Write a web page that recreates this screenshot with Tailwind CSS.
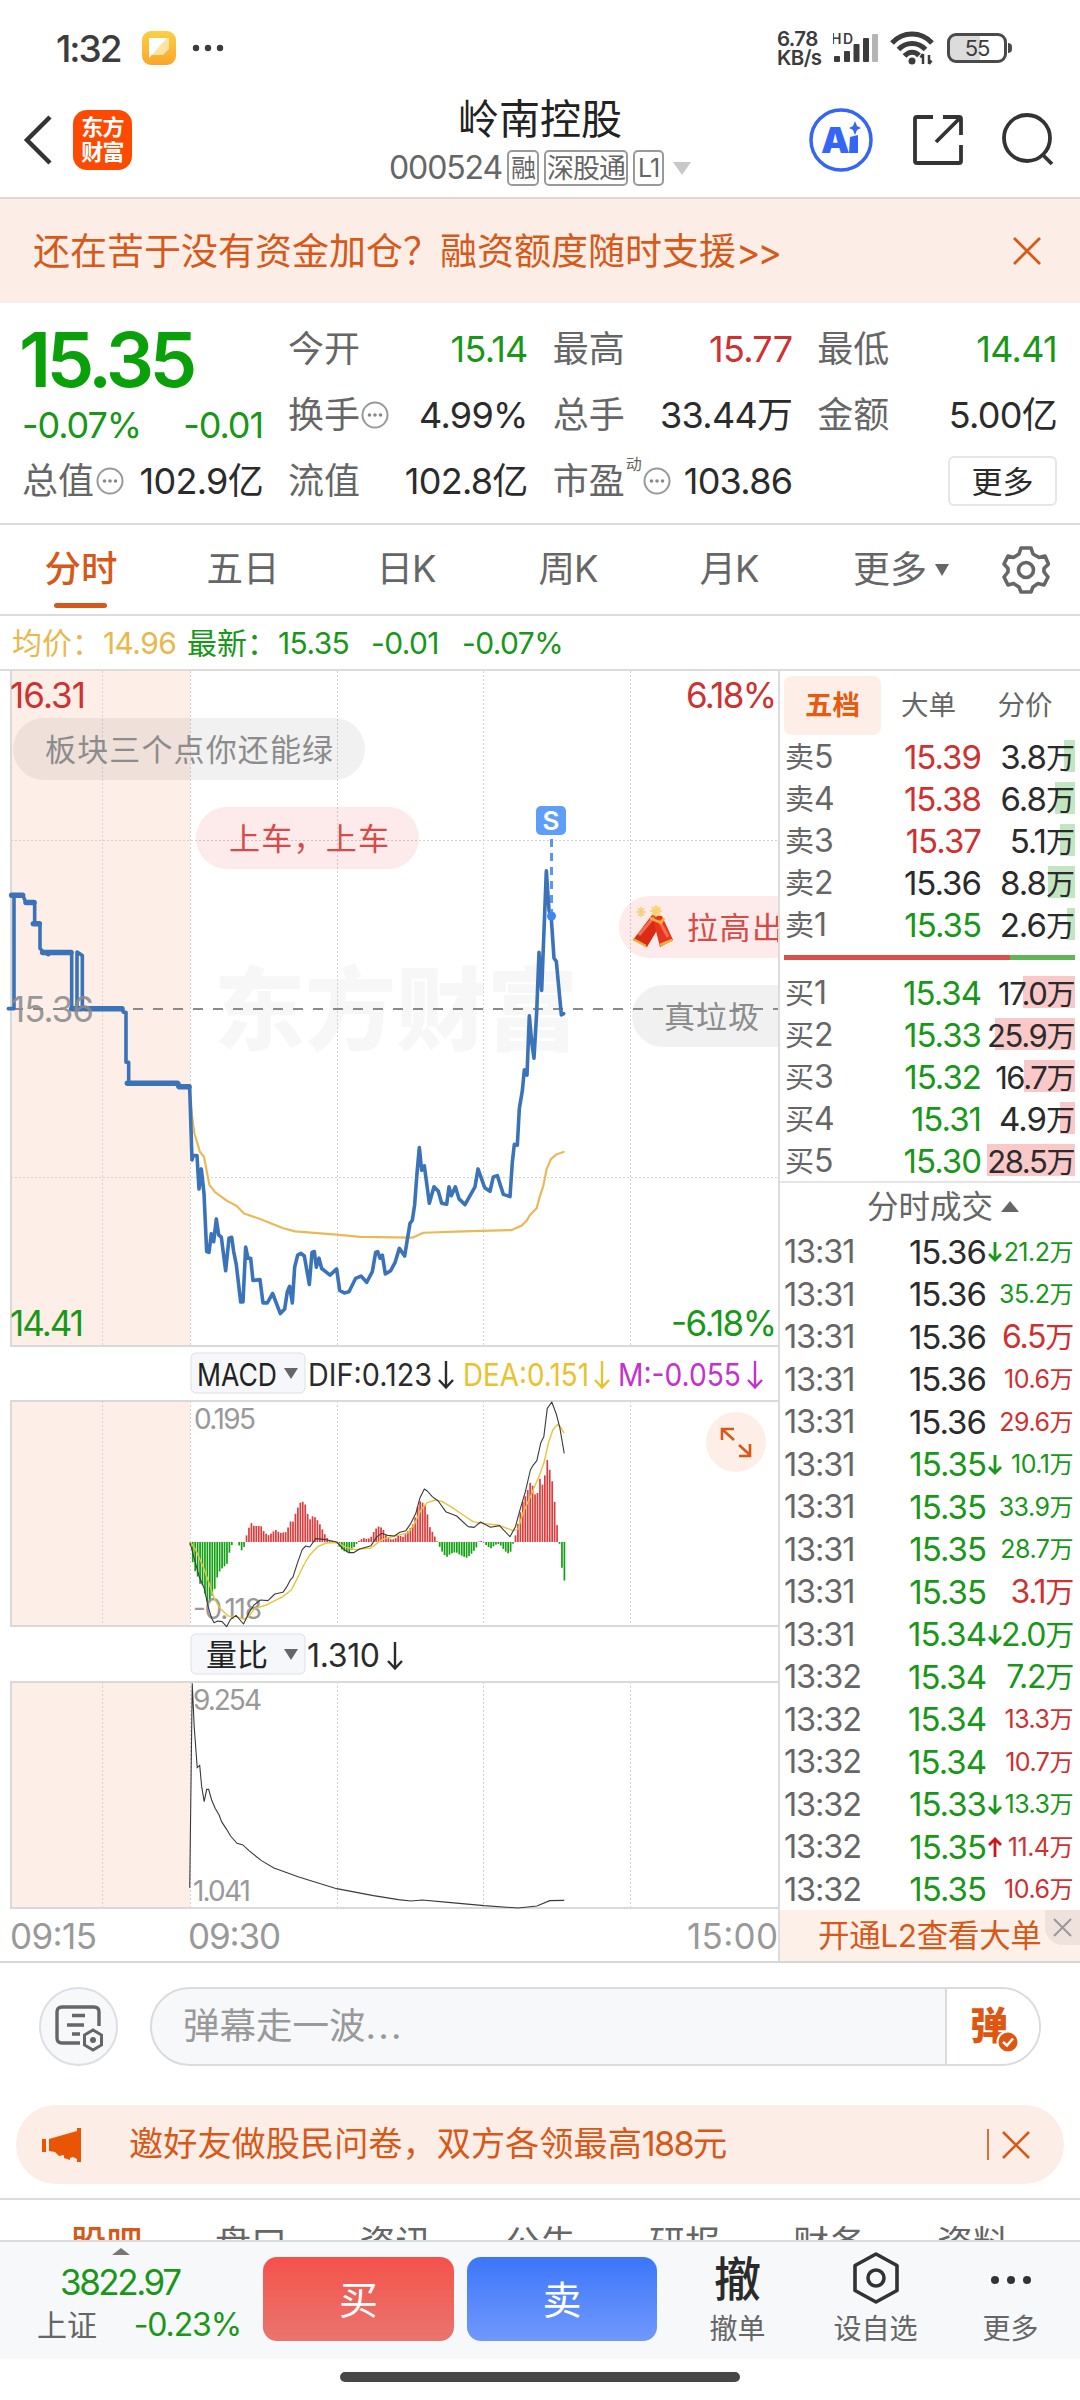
<!DOCTYPE html>
<html lang="zh-CN">
<head>
<meta charset="utf-8">
<title>岭南控股 000524</title>
<script src="https://cdn.jsdelivr.net/npm/@tailwindcss/browser@4"></script>
</head>
<body class="w-[1080px] h-[2400px] overflow-hidden bg-white text-[#2b2b2b] font-['Inter','Noto_Sans_CJK_SC',sans-serif] leading-none whitespace-nowrap">

<!-- status bar -->
<div class="h-[96px] flex items-center pl-[56px] pr-[73px]">
  <span class="w-[86px] text-[37px] tracking-[-0.055em] text-[#3c3c3c] font-medium">1:32</span>
  <svg class="w-[34px] h-[34px]" viewBox="0 0 34 34"><defs><linearGradient id="note" x1="0" y1="0" x2="0" y2="1"><stop offset="0" stop-color="#fbd044"/><stop offset="1" stop-color="#fba52a"/></linearGradient></defs><rect width="34" height="34" rx="9" fill="url(#note)"/><path d="M7 7H27V18L21 24H7Z" fill="#fde3a4"/><path d="M7 7H25L7 27Z" fill="#fff"/></svg>
  <svg class="w-[32px] h-[8px] ml-[16px]" viewBox="0 0 32 8" fill="#3c3c3c"><circle cx="4" cy="4" r="3.2"/><circle cx="16" cy="4" r="3.2"/><circle cx="28" cy="4" r="3.2"/></svg>
  <div class="ml-auto w-[56px] text-[20.500px] leading-[19px] tracking-[-0.03em] font-semibold text-[#3c3c3c]"><div>6.78</div><div>KB/s</div></div>
  <svg class="w-[48px] h-[34px]" viewBox="0 0 48 34"><text x="-2" y="13" font-size="14" font-weight="600" fill="#3c3c3c" textLength="22">HD</text><g fill="#3c3c3c"><rect x="1" y="25" width="6" height="6" rx="1"/><rect x="11" y="20" width="6" height="11" rx="1"/><rect x="20.500" y="13" width="6" height="18" rx="1"/><rect x="30" y="7" width="6" height="24" rx="1"/></g><rect x="39" y="3" width="6" height="28" rx="1" fill="#b5b5b5"/></svg>
  <svg class="w-[44px] h-[36px] ml-[9px]" viewBox="0 0 44 36" fill="none" stroke="#3c3c3c" stroke-width="5"><path d="M2 13C13 1 31 1 42 13"/><path d="M8.500 19.500C16 11.500 28 11.500 35.500 19.500"/><path d="M14.500 26C19 21 25 21 29 25.500"/><circle cx="22" cy="31" r="3.500" fill="#3c3c3c" stroke="none"/><path d="M33 34V24M39 25V34M30.500 27.500L33 24M41.500 30.500L39 34" stroke-width="2.500"/></svg>
  <div class="relative ml-[13px] w-[60px] h-[30px] rounded-[9px] border-[3px] border-[#4a4a4a] bg-linear-to-r from-[#dcdcdc] from-55% to-white to-55% flex items-center justify-center text-[22px] tracking-tighter text-[#3c3c3c]">55<span class="absolute -right-[8px] top-[7px] w-[4px] h-[10px] rounded-r bg-[#4a4a4a]"></span></div>
</div>

<!-- header -->
<header class="h-[103px] border-b-2 border-[#d9d9d9] grid grid-cols-[330px_1fr_330px]">
  <div class="flex items-center pl-[22px] h-[88px]">
    <svg class="w-[32px] h-[50px]" viewBox="0 0 32 50" fill="none" stroke="#333" stroke-width="4.500"><path d="M28 2L5 25L28 48"/></svg>
    <div class="ml-[19px] w-[59px] h-[60px] rounded-[14px] bg-[#fd4a03] text-white text-[22px] leading-[25px] font-bold flex flex-col items-center justify-center tracking-[-0.03em]"><span>东方</span><span>财富</span></div>
  </div>
  <div class="flex flex-col items-center">
    <div class="mt-[1px] h-[44px] text-[41px] flex items-center text-[#222]">岭南控股</div>
    <div class="mt-[9px] flex items-center gap-[5px] text-[#666] text-[25px] tracking-[-0.04em]">
      <span class="text-[32px] tracking-[-0.035em]">000524</span>
      <span class="h-[36px] w-[32px] border-2 border-[#999] rounded-[5px] flex items-center justify-center">融</span>
      <span class="h-[36px] w-[84px] border-2 border-[#999] rounded-[5px] flex items-center justify-center text-[27px]">深股通</span>
      <span class="h-[36px] w-[31px] border-2 border-[#999] rounded-[5px] flex items-center justify-center">L1</span>
      <svg class="ml-[4px] w-[18px] h-[13px]" viewBox="0 0 18 13"><path d="M0 0H18L9 13Z" fill="#c8c8c8"/></svg>
    </div>
  </div>
  <div class="flex items-center justify-end h-[88px] pr-[25px] gap-[38px]">
    <svg class="w-[64px] h-[64px]" viewBox="0 0 64 64"><circle cx="32" cy="32" r="30" fill="none" stroke="#3565f6" stroke-width="3.500"/><text x="12" y="45" font-size="36" font-weight="900" fill="#3565f6" textLength="26">A</text><path d="M41 29L49 27V45H40Z" fill="#3565f6"/><path d="M46 13L48 18L52 20L48 22L46 27L44 22L40 20L44 18Z" fill="#3565f6"/></svg>
    <svg class="w-[54px] h-[54px]" viewBox="0 0 54 54" fill="none" stroke="#333" stroke-width="3.800"><path d="M22 4H6Q4 4 4 6V48Q4 50 6 50H48Q50 50 50 48V32M32 4H48Q50 4 50 6V22M49 5L25 29"/></svg>
    <svg class="w-[54px] h-[54px] -ml-[2px]" viewBox="0 0 54 54" fill="none" stroke="#333" stroke-width="3.800"><circle cx="26" cy="25" r="23"/><path d="M41 41L51 51"/></svg>
  </div>
</header>

<div class="h-[104px] bg-[#fceee6] flex items-center justify-between pl-[33px] pr-[38px] text-[#d7591a] text-[37px]">
  <span>还在苦于没有资金加仓？融资额度随时支援<span class="tracking-[-0.08em]">&gt;&gt;</span></span>
  <svg class="w-[30px] h-[30px]" viewBox="0 0 30 30" stroke="#d7591a" stroke-width="2.800"><path d="M2 2L28 28M28 2L2 28"/></svg>
</div>

<!-- quote summary -->
<section class="h-[222px] border-b-2 border-[#dcdcdc] pl-[22px] pr-[23px] flex gap-[25px] text-[36px]">
  <div class="w-[241px] pt-[23px]">
    <div class="h-[66px] -ml-[3px] flex items-center text-[76px] font-semibold text-[#0aa00a] tracking-[-0.06em]">15.35</div>
    <div class="mt-[13px] h-[40px] flex items-center justify-between text-[#189718] tracking-[-0.03em]"><span>-0.07%</span><span>-0.01</span></div>
    <div class="mt-[16px] h-[40px] flex items-center text-[#666]">总值<svg class="w-[28px] h-[28px] ml-[2px]" viewBox="0 0 28 28"><circle cx="14" cy="14" r="12.500" fill="none" stroke="#999" stroke-width="2"/><g fill="#888"><circle cx="8.500" cy="14" r="1.800"/><circle cx="14" cy="14" r="1.800"/><circle cx="19.500" cy="14" r="1.800"/></g></svg><span class="ml-auto text-[#2b2b2b] tracking-[-0.02em]">102.9亿</span></div>
  </div>
  <div class="flex-1 pt-[26px] grid grid-cols-3 gap-x-[25px] auto-rows-[66px] tracking-[-0.02em] text-[#2b2b2b]" id="stats"></div>
</section>

<!-- period tabs -->
<nav class="relative h-[91px] border-b-2 border-[#dcdcdc] flex items-center text-[36.500px] text-[#666]">
  <span class="w-[162px] text-center text-[#d7591a] font-medium">分时</span>
  <span class="w-[162px] text-center">五日</span>
  <span class="w-[164px] text-center tracking-[-0.03em]">日K</span>
  <span class="w-[160px] text-center tracking-[-0.03em]">周K</span>
  <span class="w-[162px] text-center tracking-[-0.03em]">月K</span>
  <span class="w-[193px] pl-[43px] flex items-center gap-[8px] text-[37px]">更多<svg class="w-[14px] h-[12px]" viewBox="0 0 14 12"><path d="M0 0H14L7 12Z" fill="#666"/></svg></span>
  <svg class="w-[48px] h-[50px] -ml-[1px]" viewBox="0 0 48 50" fill="none" stroke="#666" stroke-width="3.600" stroke-linejoin="round"><path d="M19 3H29L31 9L37 12.500L43 11L46.500 19L42 23.500V27L46 32L42 40L36 38.500L31 42L29 47H19L17 42L11.500 38.500L6 40L2 32L6 27V23.500L2 19L6 11L11.500 12.500L17 9Z"/><circle cx="24" cy="25" r="7.500"/></svg>
  <div class="absolute left-[54px] bottom-[6px] w-[53px] h-[5px] rounded-full bg-[#d7591a]"></div>
</nav>
<div class="h-[55px] border-b-2 border-[#dcdcdc] flex items-center pl-[12px] pt-[1px] text-[30px] text-[#189718] tracking-[-0.02em]">
  <span class="w-[91px] text-[#e9b84d] tracking-normal">均价：</span><span class="w-[84px] text-[#e9b84d]">14.96</span>
  <span class="w-[91px] tracking-normal">最新：</span><span class="w-[93px]">15.35</span><span class="w-[91px]">-0.01</span><span>-0.07%</span>
</div>

<main class="h-[1292px] flex border-b-2 border-[#d6d6d6]">
  <!-- charts; viewBox uses page coordinates -->
  <svg class="w-[778px] h-[1290px] shrink-0" viewBox="0 671 778 1290">
    <g fill="#fdeee7"><rect x="11" y="671" width="179" height="675"/><rect x="11" y="1401" width="179" height="225"/><rect x="11" y="1682" width="179" height="226"/></g>
    <text x="214" y="1043" font-size="91" font-weight="900" fill="#f7f7f7" textLength="364">东方财富</text>
    <g stroke="#d2d2d2" stroke-width="1" stroke-dasharray="2 2" fill="none">
      <path d="M102.500 671V1346M190.500 671V1346M337.500 671V1346M483.500 671V1346M630.500 671V1346M11 840.500H778M11 1177.500H778"/>
      <path d="M102.500 1401V1626M190.500 1401V1626M337.500 1401V1626M483.500 1401V1626M630.500 1401V1626"/>
      <path d="M102.500 1682V1908M190.500 1682V1908M337.500 1682V1908M483.500 1682V1908M630.500 1682V1908"/>
    </g>
    <g stroke="#d9d9d9" stroke-width="2" fill="none"><path d="M778 1346H11V671"/><path d="M778 1401H11V1626H778"/><path d="M778 1682H11V1908H778"/></g>

    <g font-size="31">
      <rect x="13" y="718" width="352" height="62" rx="31" fill="#000" fill-opacity=".055"/><text x="45" y="761" fill="#8c8c8c" textLength="288">板块三个点你还能绿</text>
      <rect x="196" y="807" width="223" height="62" rx="31" fill="#f03c3c" fill-opacity=".1"/><text x="229" y="850" fill="#d64a48" textLength="160">上车，上车</text>
      <rect x="619" y="896" width="220" height="62" rx="31" fill="#f03c3c" fill-opacity=".1"/><text x="687" y="939" fill="#d64a48" textLength="96">拉高出</text>
      <rect x="632" y="985" width="190" height="62" rx="31" fill="#000" fill-opacity=".055"/>
    </g>
    <g><path d="M633 940L652 915L662 922L647 947Z" fill="#d92b16"/><path d="M652 915L662 916L673 940L660 947Z" fill="#e53420"/><path d="M639 935L654 917M668 937L659 920" stroke="#ff6b4d" stroke-width="3"/><path d="M633 939L646 946M660 945L672 940M650 918L661 923L664 918" stroke="#e8b13c" stroke-width="2.500" fill="none"/><circle cx="656" cy="911" r="5" fill="#fbe08c"/><path d="M656 905V917M650 911H662M652 907L660 915M660 907L652 915M641 907V917M636 912H646M638 908L644 916M644 908L638 916" stroke="#f6cf77" stroke-width="1.500"/></g>

    <path d="M13 1009H778" stroke="#8a8a8a" stroke-width="1.800" stroke-dasharray="10 10"/>
    <text x="664" y="1028" font-size="31" fill="#8c8c8c" textLength="95">真垃圾</text>

    <g font-size="35">
      <text x="10" y="708" fill="#cf3030" textLength="76">16.31</text><text x="686" y="708" fill="#cf3030" textLength="91">6.18%</text>
      <text x="10" y="1336" fill="#189718" textLength="74">14.41</text><text x="671" y="1336" fill="#189718" textLength="106">-6.18%</text>
    </g>

    <g fill="none" transform="translate(0 660) scale(.33333 .44643)" stroke-linejoin="round" stroke-linecap="round">
      <path vector-effect="non-scaling-stroke" stroke="#eab955" stroke-width="2.200" d="M572 980L576 1020L583 1060L600 1102L612 1113L628 1175L645 1192L680 1211L710 1223L732 1240L780 1252L850 1273L885 1280L1010 1287L1080 1292L1237 1294L1270 1283L1390 1280L1535 1277L1565 1267L1580 1256L1590 1243L1610 1228L1618 1205L1630 1178L1640 1140L1653 1118L1670 1107L1691 1102"/>
      <path vector-effect="non-scaling-stroke" stroke="#3a73b9" stroke-width="3.600" d="M25 781H42V527H68L78 543H104V591H120V646L130 654L145 660L152 655H215V781H231V654L247 662V781H366L370 789H378V901H386V948H533L535 956H569L576 1120L580 1110H591L597 1185L604 1140L612 1195L620 1325L627 1327L634 1285L641 1303L649 1252L656 1288L664 1293L677 1368L687 1295L695 1293L701 1325L709 1355L722 1438H729L737 1315L744 1340H752L759 1390L780 1388L789 1440H802L818 1419L841 1464L854 1454L862 1415L869 1403L877 1440L884 1360L893 1333L903 1329L913 1335L928 1399L936 1327L943 1325L949 1360L957 1340L965 1363L990 1378L1010 1364L1019 1412L1033 1418L1047 1415L1067 1385L1083 1380L1100 1394L1117 1370L1127 1327L1133 1325L1140 1340L1147 1333L1156 1375L1172 1368L1185 1350L1198 1318L1214 1335L1230 1262L1237 1255L1244 1220L1251 1150L1258 1092L1265 1143L1273 1133L1288 1217L1302 1180L1315 1190L1325 1217L1340 1219L1347 1180L1354 1200L1366 1180L1377 1207L1395 1220L1425 1180L1434 1140L1454 1182L1470 1190L1480 1158L1492 1155L1510 1197L1530 1202L1537 1125L1543 1085L1552 1087L1558 1005L1567 965L1573 918L1581 930L1588 797L1595 855L1602 892L1610 790L1617 655L1625 740L1639 472L1647 560L1654 580L1662 668L1669 675L1684 795L1691 792"/>
      <path vector-effect="non-scaling-stroke" stroke="#3a73b9" stroke-width="5.500" d="M35 527H68M78 543H102M100 591H118M128 655H213M215 781H245M255 781H366M382 948H533L537 956H567"/>
    </g>
    <text x="11" y="1022" font-size="35" fill="#8c8c8c" fill-opacity=".9" textLength="83">15.36</text>
    <path d="M551.500 839V916" stroke="#5a96ef" stroke-width="3" stroke-dasharray="8 6"/><circle cx="551.500" cy="916" r="4.500" fill="#3f86f0"/>
    <rect x="536" y="806" width="30" height="29" rx="5" fill="#5d9ff8"/><text x="551" y="830" font-size="26" font-weight="600" text-anchor="middle" fill="#fff">S</text>

    <!-- MACD -->
    <g font-size="31">
      <rect x="191" y="1353" width="114" height="40" rx="5" fill="#f6f7fa" stroke="#dedfe3"/><text x="197" y="1386" fill="#222" textLength="80" lengthAdjust="spacingAndGlyphs">MACD</text><path d="M284 1368H298L291 1379Z" fill="#666"/>
      <text x="308" y="1386" fill="#2b2b2b" textLength="124" lengthAdjust="spacingAndGlyphs">DIF:0.123</text><text x="463" y="1386" fill="#e9c22e" textLength="126" lengthAdjust="spacingAndGlyphs">DEA:0.151</text><text x="618" y="1386" fill="#c531cf" textLength="123" lengthAdjust="spacingAndGlyphs">M:-0.055</text>
      <g fill="none" stroke-width="2.400"><path d="M446 1361V1387M439 1380L446 1387.500L453 1380" stroke="#2b2b2b"/><path d="M602 1361V1387M595 1380L602 1387.500L609 1380" stroke="#e9c22e"/><path d="M755 1361V1387M748 1380L755 1387.500L762 1380" stroke="#c531cf"/></g>
    </g>
    <g id="bars"></g>
    <g fill="#999" font-size="28"><text x="194" y="1429" textLength="62">0.195</text><text x="193" y="1619" textLength="69">-0.118</text></g>
    <g fill="none" transform="translate(0 1340) scale(.498 .33333)" stroke-linejoin="round">
      <path vector-effect="non-scaling-stroke" stroke="#e6c53a" stroke-width="1.400" d="M382 605L393 630L408 680L420 730L430 775L442 805L458 828L474 830L490 838L500 828L512 805L535 795L568 770L585 750L597 715L610 675L622 645L638 620L655 609L676 608L695 622L715 629L745 624L757 610L768 598L785 591L800 586L820 578L833 550L845 510L858 488L875 480L888 485L905 500L930 525L950 545L968 550L1000 555L1030 572L1040 568L1050 520L1062 480L1072 445L1082 410L1092 370L1101 310L1110 270L1120 253L1125 260L1133 280"/>
      <path vector-effect="non-scaling-stroke" stroke="#3a3a3a" stroke-width="1.100" d="M382 610L390 655L400 710L410 745L418 800L425 835L430 848L437 843L446 845L455 860L463 838L474 826L489 852L500 818L510 795L523 780L538 782L552 762L568 757L576 740L583 720L588 712L597 670L607 628L614 618L622 621L634 596L650 598L676 606L688 625L700 638L710 638L722 627L745 617L757 590L766 580L778 586L792 588L803 577L815 572L825 550L835 520L843 475L852 447L858 453L868 470L880 483L895 515L917 528L940 560L952 562L965 546L985 562L1003 557L1024 590L1035 560L1045 505L1055 455L1065 390L1070 377L1078 362L1086 308L1092 290L1099 205L1108 186L1117 222L1124 262L1133 340"/>
    </g>
    <circle cx="736" cy="1442" r="30" fill="#fdefe8"/><path d="M722 1440V1429H734M723 1430L734 1440M739 1445L750 1455M739 1456H750V1444" fill="none" stroke="#d7591a" stroke-width="2.600"/>

    <!-- volume ratio -->
    <rect x="191" y="1634" width="114" height="40" rx="5" fill="#f6f7fa" stroke="#dedfe3"/><text x="206" y="1666" font-size="31" fill="#222">量比</text><path d="M284 1649H298L291 1660Z" fill="#666"/>
    <text x="307" y="1667" font-size="32" fill="#2b2b2b" textLength="73">1.310</text><path d="M395 1642V1668M388 1661L395 1668.500L402 1661" fill="none" stroke="#2b2b2b" stroke-width="2.400"/>
    <g fill="#999" font-size="28"><text x="193" y="1710" textLength="69">9.254</text><text x="193" y="1901" textLength="58">1.041</text></g>
    <path transform="translate(0 1620) scale(.498 .33333)" vector-effect="non-scaling-stroke" fill="none" stroke="#3a3a3a" stroke-width="1.100" d="M381 803L386 190L390 320L396 443L401 436L405 500L410 545L415 508H419L425 540L432 565L440 585L445 605L455 628L463 648L476 670L487 674L500 692L525 722L550 744L600 771L676 806L750 827L800 839L825 843L848 840L900 847L972 857L1040 864L1078 858L1104 842L1133 841"/>
    <g fill="#999" font-size="35"><text x="10" y="1949" textLength="87">09:15</text><text x="188" y="1949" textLength="93">09:30</text><text x="687" y="1949" textLength="91">15:00</text></g>
  </svg>

  <!-- order book -->
  <aside class="w-[302px] border-l-2 border-[#dcdcdc] flex flex-col">
    <div class="h-[69px] pt-[5px] pl-[4px] flex items-start text-[27.500px] text-[#666]">
      <span class="w-[97px] h-[59px] rounded-[8px] bg-[#fdeee7] text-[#e75a10] font-bold flex items-center justify-center">五档</span>
      <span class="w-[95px] h-[59px] flex items-center justify-center">大单</span>
      <span class="w-[98px] h-[59px] flex items-center justify-center">分价</span>
    </div>
    <div id="asks"></div>
    <div class="mt-[5px] ml-[4px] mr-[5px] h-[5px] flex bg-[#5fb653]"><div class="w-[226px] h-full bg-[#d94f4c]"></div></div>
    <div class="mt-[16px]" id="bids"></div>
    <div class="border-t-2 border-[#e6e6e6] h-[49px] flex items-center justify-center gap-[8px] pl-[26px] text-[31.500px] text-[#666]">分时成交<svg class="w-[18px] h-[11px]" viewBox="0 0 18 11"><path d="M0 11H18L9 0Z" fill="#666"/></svg></div>
    <div class="pt-[1px] h-[680px]" id="ticks"></div>
    <div class="relative mt-auto h-[51px] shrink-0 bg-[#fdf0e9] flex items-center pl-[38px] text-[31.500px] text-[#d7591a] tracking-[-0.01em]">开通L2查看大单<span class="absolute right-0 top-0 w-[35px] h-[35px] rounded-bl-[18px] bg-[#efe2dc] flex items-center justify-center"><svg class="w-[19px] h-[19px]" viewBox="0 0 19 19" stroke="#999" stroke-width="2"><path d="M1 1L18 18M18 1L1 18"/></svg></span></div>
  </aside>
</main>

<!-- comment input -->
<section class="h-[142px] pt-[24px] pl-[39px] pr-[39px] flex gap-[32px]">
  <div class="w-[79px] h-[79px] rounded-full border-2 border-[#dcdfe3] bg-[#f7f8fa] flex items-center justify-center"><svg class="w-[52px] h-[50px]" viewBox="0 0 52 50" fill="none" stroke="#666" stroke-width="3.400"><path d="M27 41H9Q4 41 4 36V10Q4 5 9 5H41Q46 5 46 10V24M19 13.500H32M14 23H31M19 32H27"/><path d="M40 28L48.500 33V43L40 48L31.500 43V33Z" stroke-width="3"/><circle cx="40" cy="38" r="3" fill="#666" stroke="none"/></svg></div>
  <div class="flex-1 h-[79px] rounded-full border-2 border-[#d9dbdf] bg-[#f7f8fa] flex items-center overflow-hidden">
    <span class="flex-1 pl-[31px] text-[36.500px] text-[#999]">弹幕走一波<span class="tracking-[0.06em]">...</span></span>
    <span class="relative w-[94px] h-full border-l-2 border-[#d9dbdf] bg-white"><span class="absolute left-[23px] top-[17px] text-[38px] font-black text-[#dd5713]">弹</span><svg class="absolute left-[49px] top-[41px] w-[24px] h-[24px]" viewBox="0 0 24 24"><circle cx="12" cy="12" r="10.500" fill="#dd5713" stroke="#fff" stroke-width="2"/><path d="M7 12L11 15.500L17 8.500" fill="none" stroke="#fff" stroke-width="2.500"/></svg></span>
  </div>
</section>

<div class="mx-[16px] h-[79px] rounded-full bg-[#fceee6] flex items-center pl-[25px] pr-[33px] text-[34.200px] text-[#d7591a]">
  <svg class="w-[41px] h-[34px]" viewBox="0 0 41 34" fill="#e85504"><path d="M1 11H5V24H1ZM8 11L36 3V0H40V34H36V31L32 29L29 30V32L23 30V27L18 28L14 24L8 23Z"/></svg>
  <span class="ml-[47px]">邀好友做股民问卷，双方各领最高<span class="tracking-[-0.05em]">188</span>元</span>
  <span class="ml-auto w-[2px] h-[31px] bg-[#d7713c]"></span>
  <svg class="ml-[12px] w-[30px] h-[30px]" viewBox="0 0 30 30" stroke="#d7591a" stroke-width="2.600"><path d="M2 2L28 28M28 2L2 28"/></svg>
</div>

<div class="mt-[14px] h-[42px] border-t-2 border-[#dcdcdc] overflow-hidden flex pl-[34px] pt-[26px] text-[36px] text-[#666]">
  <span class="w-[145px] text-center font-medium text-[#d7591a]">股吧</span><span class="w-[144px] text-center">盘口</span><span class="w-[145px] text-center">资讯</span><span class="w-[145px] text-center">公告</span><span class="w-[144px] text-center">研报</span><span class="w-[144px] text-center">财务</span><span class="w-[144px] text-center">资料</span>
</div>

<!-- trade bar -->
<footer class="h-[119px] border-t-2 border-[#d9dbdf] bg-[#f7f8fa] flex text-[#666] text-[28px]">
  <div class="w-[263px] pl-[37px] pr-[22px] pt-[6px] flex flex-col">
    <svg class="w-[18px] h-[7px] ml-[75px]" viewBox="0 0 18 7"><path d="M0 7H18L9 0Z" fill="#777"/></svg>
    <div class="h-[40px] mt-[7px] pl-[23px] flex items-center text-[35px] tracking-[-0.07em] text-[#189718]">3822.97</div>
    <div class="h-[38px] mt-[4px] flex items-center justify-between text-[30px]"><span>上证</span><span class="text-[32px] tracking-[-0.035em] text-[#189718]">-0.23%</span></div>
  </div>
  <div class="mt-[15px] w-[191px] h-[84px] rounded-[14px] bg-linear-to-b from-[#f4514a] to-[#e9746d] flex items-center justify-center text-white text-[39px]">买</div>
  <div class="mt-[15px] ml-[13px] w-[190px] h-[84px] rounded-[14px] bg-linear-to-b from-[#3b76fa] to-[#7098fb] flex items-center justify-center text-white text-[39px]">卖</div>
  <div class="ml-[52px] w-[57px] pt-[13px] flex flex-col items-center"><span class="text-[47px] font-medium text-[#2b2b2b] h-[47px]">撤</span><span class="mt-[13px]">撤单</span></div>
  <div class="ml-[66px] w-[87px] pt-[9px] flex flex-col items-center"><svg class="w-[50px] h-[54px]" viewBox="0 0 50 54" fill="none" stroke="#333" stroke-width="3.600" stroke-linejoin="round"><path d="M25 3L46 14.500V39.500L25 51L4 39.500V14.500Z"/><circle cx="25" cy="27" r="8"/></svg><span class="mt-[10px]">设自选</span></div>
  <div class="ml-[62px] w-[59px] pt-[9px] flex flex-col items-center"><svg class="w-[42px] h-[54px]" viewBox="0 0 42 54" fill="#333"><circle cx="5" cy="29" r="4"/><circle cx="21" cy="29" r="4"/><circle cx="37" cy="29" r="4"/></svg><span class="mt-[10px]">更多</span></div>
</footer>
<div class="mx-auto mt-[13px] w-[400px] h-[10px] rounded-full bg-[#474747]"></div>

<script>
const info = '<svg class="w-[28px] h-[28px] ml-[1px]" viewBox="0 0 28 28"><circle cx="14" cy="14" r="12.5" fill="none" stroke="#999" stroke-width="2"/><g fill="#888"><circle cx="8.5" cy="14" r="1.8"/><circle cx="14" cy="14" r="1.8"/><circle cx="19.5" cy="14" r="1.8"/></g></svg>';
const G = 'text-[#189718]', R = 'text-[#cf3030]', K = 'text-[#2b2b2b]';
const cell = (l, v, c, extra = '') => `<div class="h-[40px] flex items-center justify-between"><span class="flex items-center text-[#666] tracking-normal">${l}${extra}</span><span class="${c}">${v}</span></div>`;
document.getElementById('stats').innerHTML =
  cell('今开', '15.14', G) + cell('最高', '15.77', R) + cell('最低', '14.41', G) +
  cell('换手', '4.99%', K, info) + cell('总手', '33.44万', K) + cell('金额', '5.00亿', K) +
  cell('流值', '102.8亿', K) +
  cell('市盈', '103.86', K, '<span class="text-[16px] mb-[34px] ml-[1px]">动</span>' + info) +
  '<div class="flex justify-end h-[50px] -mt-[5px]"><span class="w-[109px] h-[50px] rounded-[6px] border-2 border-[#e6e6e6] flex items-center justify-center text-[31px] tracking-normal">更多</span></div>';

const row = (l, p, c, q, w, bg, h) => `<div class="relative ${h} flex items-start"><div class="absolute right-[5px] top-0 h-[32px] ${bg}" style="width:${w}px"></div><div class="relative w-full h-[34px] flex items-center pl-[5px] text-[#666]"><span class="w-[70px] text-[29px] flex items-center">${l[0]}<span class="text-[32px]">${l[1]}</span></span><span class="w-[126px] text-right text-[33px] tracking-[-0.03em] ${c}">${p}</span><span class="w-[93px] flex justify-end items-baseline text-[#2b2b2b] ${q.length > 4 ? 'text-[31px] tracking-[-0.045em]' : 'text-[33px] tracking-[-0.03em]'}">${q.slice(0, -1)}<span class="text-[29px]">万</span></span></div></div>`;
const H = 'h-[42px]', HL = 'h-[37px]';
document.getElementById('asks').innerHTML = [['卖5','15.39',R,'3.8万',11],['卖4','15.38',R,'6.8万',20],['卖3','15.37',R,'5.1万',15],['卖2','15.36',K,'8.8万',27],['卖1','15.35',G,'2.6万',8]].map(r => row(...r, 'bg-[#c2e6c1]', H)).join('');
document.getElementById('bids').innerHTML = [['买1','15.34',G,'17.0万',52],['买2','15.33',G,'25.9万',80],['买3','15.32',G,'16.7万',51],['买4','15.31',G,'4.9万',15],['买5','15.30',G,'28.5万',88]].map((r, i) => row(...r, 'bg-[#f9c8c8]', i < 4 ? H : HL)).join('');

const arrow = { d: '<svg class="w-[14px] h-[20px]" viewBox="0 0 14 20" fill="none" stroke="#189718" stroke-width="2.8"><path d="M7 0V18M1 12L7 18L13 12"/></svg>', u: '<svg class="w-[14px] h-[20px]" viewBox="0 0 14 20" fill="none" stroke="#cf1515" stroke-width="2.8"><path d="M7 20V2M1 8L7 2L13 8"/></svg>', n: '' };
document.getElementById('ticks').innerHTML = [
  ['13:31','15.36',K,'d','21.2',G],['13:31','15.36',K,'n','35.2',G],['13:31','15.36',K,'n','6.5',R],['13:31','15.36',K,'n','10.6',R],
  ['13:31','15.36',K,'n','29.6',R],['13:31','15.35',G,'d','10.1',G],['13:31','15.35',G,'n','33.9',G],['13:31','15.35',G,'n','28.7',G],
  ['13:31','15.35',G,'n','3.1',R],['13:31','15.34',G,'d','2.0',G],['13:32','15.34',G,'n','7.2',G],['13:32','15.34',G,'n','13.3',R],
  ['13:32','15.34',G,'n','10.7',R],['13:32','15.33',G,'d','13.3',G],['13:32','15.35',G,'u','11.4',R],['13:32','15.35',G,'n','10.6',R]
].map(([t, p, c, a, q, qc]) => `<div class="h-[42.500px] flex items-center pl-[4px]"><span class="w-[100px] text-[32.500px] tracking-[-0.035em] text-[#666]">${t}</span><span class="w-[102px] text-right text-[33px] tracking-[-0.03em] ${c}">${p}</span><span class="w-[17px] pl-[2px]">${arrow[a]}</span><span class="w-[70px] flex justify-end items-baseline ${qc} ${q.length > 3 ? 'text-[25px] tracking-[-0.02em]' : 'text-[32px] tracking-[-0.04em]'}">${q}<span class="${q.length > 3 ? 'text-[24px]' : 'text-[29px]'}">万</span></span></div>`).join('');

// MACD histogram: [x, height] knots at one bar per minute, interpolated
const k = [382,-10,386,-55,391,-85,396,-100,401,-125,408,-130,413,-165,419,-190,425,-165,430,-150,434,-115,440,-90,448,-75,455,-70,460,-35,465,-10,470,0,476,0,480,-10,485,-25,489,-25,492,5,499,40,504,58,510,48,524,48,531,28,540,20,553,37,562,27,575,30,583,62,587,55,592,80,597,100,602,117,607,122,613,112,621,65,629,80,635,70,640,60,648,35,655,15,662,4,668,3,676,0,683,-18,690,-27,700,-33,708,-20,715,-8,718,0,724,7,730,12,738,8,745,15,752,35,759,47,768,42,775,20,782,8,792,8,800,20,810,15,815,25,823,40,830,55,836,85,841,125,847,118,852,118,858,85,863,45,870,25,877,5,880,-5,886,-25,892,-38,897,-45,905,-35,915,-30,925,-40,938,-48,950,-30,957,-15,960,0,963,3,967,3,970,0,975,-8,985,-20,995,-8,1003,-5,1010,-20,1018,-33,1024,-35,1029,-10,1032,3,1036,25,1042,70,1048,110,1052,135,1058,140,1062,180,1069,172,1073,142,1079,145,1084,190,1089,172,1094,200,1099,247,1104,215,1109,180,1114,115,1118,60,1121,5,1124,-8,1128,-75,1133.5,-118];
let out = '', j = 0;
for (let x = 382; x <= 1133.5; x += 4.91) {
  while (j < k.length - 4 && k[j + 2] < x) j += 2;
  const h = (k[j + 1] + (k[j + 3] - k[j + 1]) * (x - k[j]) / (k[j + 2] - k[j])) / 3;
  out += `<rect x="${(x * .498 - .8).toFixed(2)}" y="${(h > 0 ? 1542 - h : 1542).toFixed(1)}" width="1.7" height="${Math.abs(h).toFixed(1)}" fill="${h > 0 ? '#dc3c3c' : '#12a012'}"/>`;
}
document.getElementById('bars').innerHTML = out;
</script>
</body>
</html>
